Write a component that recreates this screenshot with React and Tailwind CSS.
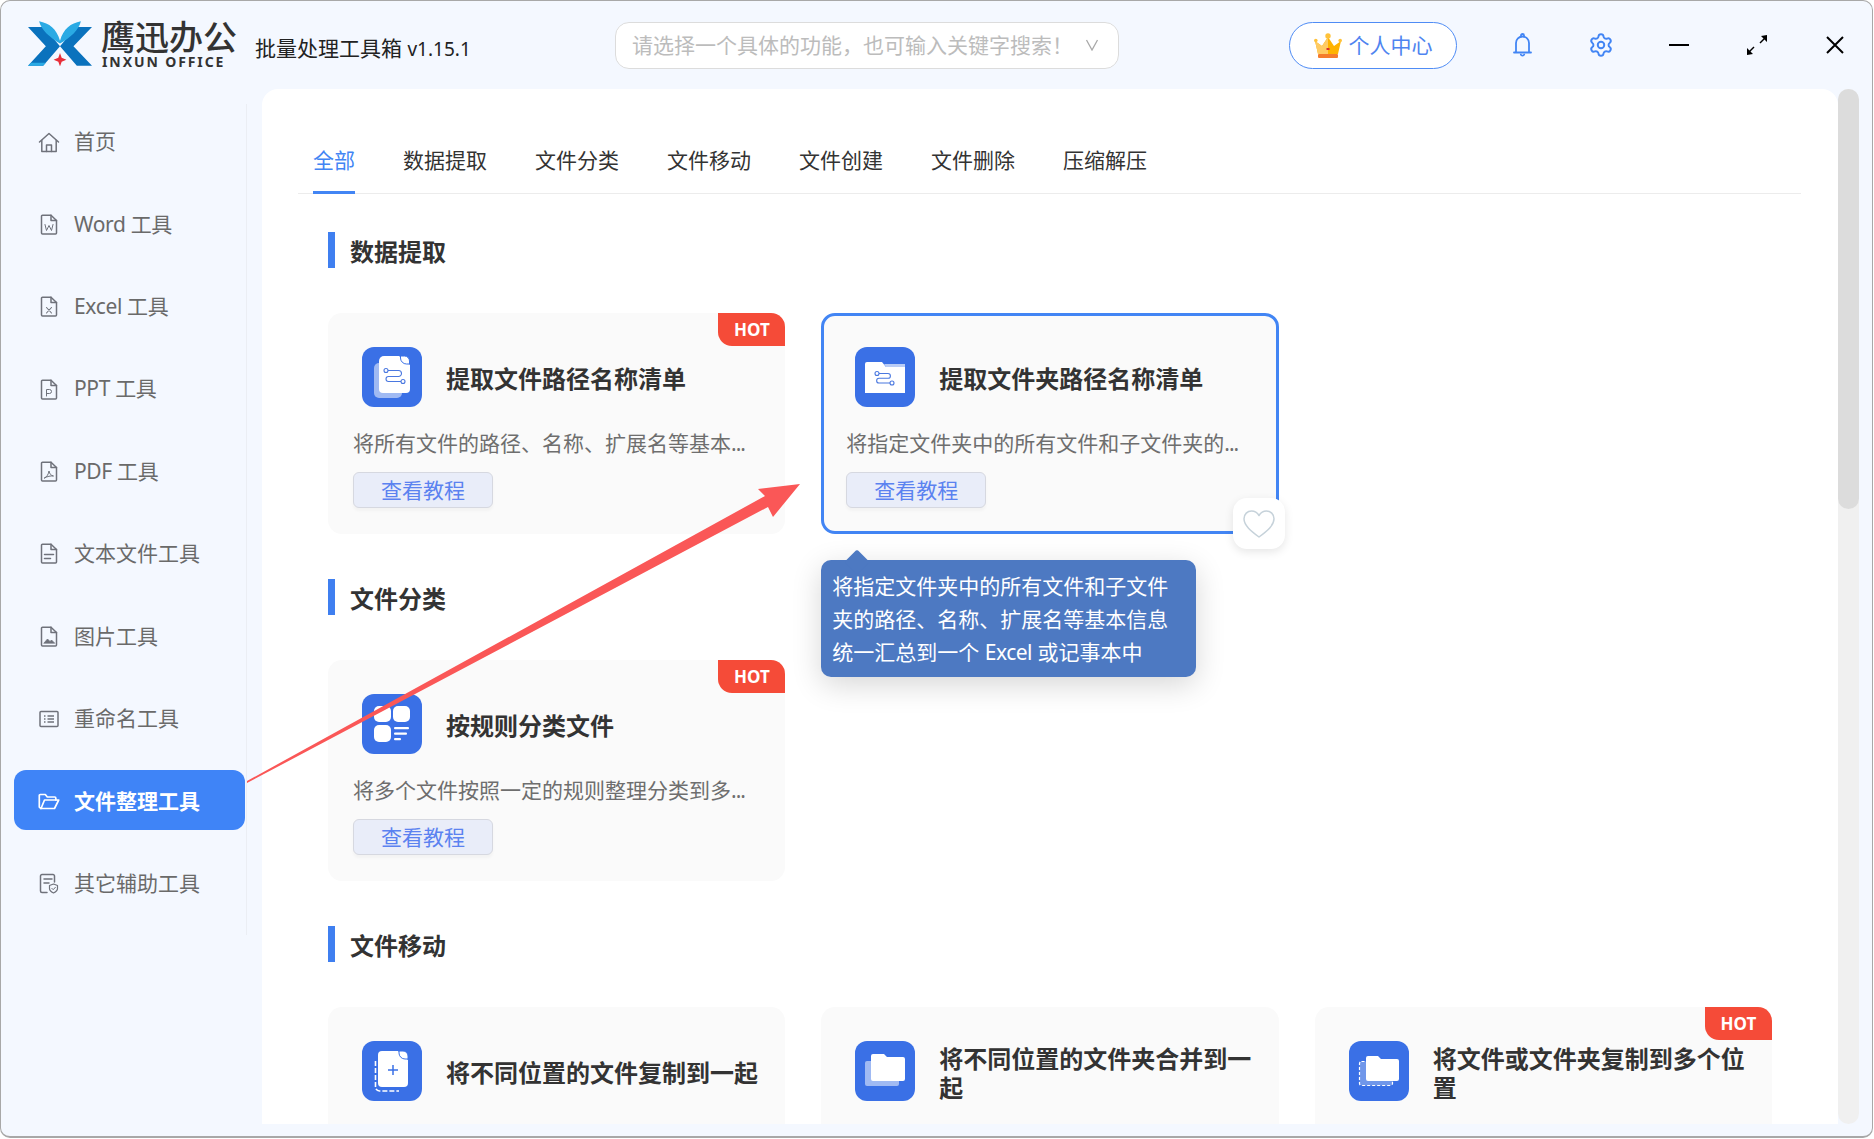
import React from "react";
import { Settings } from "lucide-react";

const FONT = 'font-["Noto_Sans","Noto_Sans_CJK_SC",sans-serif]';

function DocBase({ children }) {
  return (
    <svg width="18" height="21" viewBox="0 0 18 21" fill="none" stroke="#6f727b" strokeWidth="1.5" strokeLinejoin="round" strokeLinecap="round">
      <path d="M1.5 2.2a1 1 0 0 1 1-1H11l5.5 5.3V19a1 1 0 0 1-1 1h-13a1 1 0 0 1-1-1z" />
      <path d="M11 1.2v5.3h5.5" />
      {children}
    </svg>
  );
}

const sideIcons = {
  home: (
    <svg width="22" height="21" viewBox="0 0 22 21" fill="none" stroke="#6f727b" strokeWidth="1.5" strokeLinejoin="round" strokeLinecap="round">
      <path d="M1.5 10 11 1.5 20.5 10" />
      <path d="M3.8 8.5V19.5h14.4V8.5" />
      <path d="M8.5 19.5v-6.5h5v6.5" />
    </svg>
  ),
  word: <DocBase><path d="M5 10.5l1.5 6 2.5-5 2.5 5 1.5-6" strokeWidth="1" /></DocBase>,
  excel: <DocBase><path d="M6.5 11.5l5 5.5M11.5 11.5l-5 5.5" strokeWidth="1.1" /></DocBase>,
  ppt: <DocBase><path d="M6.5 17v-6.5h3a2 2 0 0 1 0 4h-3" strokeWidth="1" /></DocBase>,
  pdf: <DocBase><path d="M4.5 17c2.5-1 4-4 4.5-7 .5 3 2 4.5 4.5 5-3-.3-6 .3-9 2z" strokeWidth="1" /></DocBase>,
  text: <DocBase><path d="M4.5 11.5h9M4.5 15.5h6" strokeWidth="1.5" /></DocBase>,
  image: <DocBase><path d="M4 17l3.5-4 2.5 2.5 1.5-1.5L14.500 17z" fill="#6f727b" strokeWidth="0.8" /></DocBase>,
  rename: (
    <svg width="20" height="18" viewBox="0 0 20 18" fill="none" stroke="#6f727b" strokeWidth="1.5">
      <rect x="1" y="1.500" width="18" height="15" rx="1" />
      <path d="M5 6h1.500M5 9h1.500M5 12h1.500M8.500 6H15M8.500 9H15M8.500 12H15" />
    </svg>
  ),
  folder: (
    <svg width="22" height="17" viewBox="0 0 22 17" fill="none" stroke="#ffffff" strokeWidth="1.700" strokeLinejoin="round" strokeLinecap="round">
      <path d="M3 15.500 1.300 14V2.500a1 1 0 0 1 1-1h5l2 2.500h7.500a1 1 0 0 1 1 1V7" />
      <path d="M3 15.500h13.500L20.700 7H6.500z" />
    </svg>
  ),
  other: (
    <svg width="20" height="21" viewBox="0 0 20 21" fill="none" stroke="#6f727b" strokeWidth="1.500" strokeLinejoin="round" strokeLinecap="round">
      <path d="M8 19.500H3a1.500 1.500 0 0 1-1.500-1.500V3A1.500 1.500 0 0 1 3 1.500h11A1.500 1.500 0 0 1 15.500 3v6" />
      <path d="M5 6h8M5 10h5" />
      <path d="M14.500 11l4 1.500v3c0 2-2 3.500-4 4.500-2-1-4-2.500-4-4.500v-3z" strokeWidth="1.200" />
      <path d="M12.800 15.300l1.400 1.400 2.200-2.400" strokeWidth="1" />
    </svg>
  ),
};

const navItems = [
  ["home", "首页"],
  ["word", "Word 工具", false, true],
  ["excel", "Excel 工具", false, true],
  ["ppt", "PPT 工具", false, true],
  ["pdf", "PDF 工具", false, true],
  ["text", "文本文件工具"],
  ["image", "图片工具"],
  ["rename", "重命名工具"],
  ["folder", "文件整理工具", true],
  ["other", "其它辅助工具"],
];

const tabs = ["全部", "数据提取", "文件分类", "文件移动", "文件创建", "文件删除", "压缩解压"];

function ToolIcon({ kind }) {
  const b = "#3a70e6";
  return (
    <svg width="60" height="60" viewBox="0 0 60 60" className="shrink-0">
      <rect width="60" height="60" rx="12" fill={b} />
      {kind === "file" && (
        <g>
          <rect x="12" y="16" width="28" height="35" rx="5" fill="#a0baf3" />
          <path d="M22 9h15l11 9v24a4 4 0 0 1-4 4H21a4 4 0 0 1-4-4V14a5 5 0 0 1 5-5z" fill="#fff" />
          <path d="M38.500 9h4a5 5 0 0 1 5 5v3h-3a6 6 0 0 1-6-6z" fill="#fff" stroke={b} strokeWidth="1" />
          <g fill="none" stroke="#4a78e0" strokeWidth="1.100">
            <circle cx="24" cy="23.500" r="2" />
            <circle cx="41" cy="34.500" r="2" />
            <path d="M26 23.500h10.500a3 3 0 0 1 0 6H26.500a2.500 2.500 0 0 0 0 5H39" />
          </g>
        </g>
      )}
      {kind === "folder" && (
        <g>
          <path d="M10 17a2 2 0 0 1 2-2h15l4 5h19v26H10z" fill="#fff" />
          <path d="M29 17h21v3H31z" fill="#b9ccf6" />
          <g fill="none" stroke="#4a78e0" strokeWidth="1.100">
            <circle cx="22" cy="26.500" r="2" />
            <circle cx="37" cy="36" r="2" />
            <path d="M24 26.500h9a2.400 2.400 0 0 1 0 4.800H24a2.300 2.300 0 0 0 0 4.700h11" />
          </g>
        </g>
      )}
      {kind === "grid" && (
        <g fill="#fff">
          <rect x="12" y="12" width="17" height="16" rx="5" />
          <rect x="31" y="12" width="17" height="16" rx="5" />
          <rect x="12" y="31" width="17" height="17" rx="5" />
          <rect x="32" y="33" width="15" height="2.200" rx="1" />
          <rect x="32" y="38.500" width="13" height="2.200" rx="1" />
          <rect x="32" y="44" width="7" height="2.200" rx="1" />
        </g>
      )}
      {kind === "copy" && (
        <g>
          <path d="M13.500 20v26a4 4 0 0 0 4 4H37" fill="none" stroke="#fff" strokeWidth="1.600" strokeDasharray="5 2" />
          <path d="M20 10h16l10 9v23a4 4 0 0 1-4 4H20a4 4 0 0 1-4-4V14a4 4 0 0 1 4-4z" fill="#fff" />
          <path d="M37 10h4a5 5 0 0 1 5 5v3h-3a6 6 0 0 1-6-6z" fill="#fff" stroke={b} strokeWidth="1" />
          <path d="M31 24v10M26 29h10" stroke={b} strokeWidth="1.500" />
        </g>
      )}
      {kind === "merge" && (
        <g>
          <rect x="10" y="20" width="34" height="25" rx="2" fill="#a0baf3" />
          <path d="M16 15a2 2 0 0 1 2-2h11l3 3h16a2 2 0 0 1 2 2v20a2 2 0 0 1-2 2H18a2 2 0 0 1-2-2z" fill="#fff" />
        </g>
      )}
      {kind === "multi" && (
        <g>
          <rect x="10.500" y="20.500" width="33" height="24" rx="2" fill="#7097ea" stroke="#fff" strokeWidth="1.200" strokeDasharray="3 2" />
          <path d="M17 17a2 2 0 0 1 2-2h10l3 3h16a2 2 0 0 1 2 2v18a2 2 0 0 1-2 2H19a2 2 0 0 1-2-2z" fill="#fff" />
        </g>
      )}
    </svg>
  );
}

function Card({ icon, title, desc, hot, selected }) {
  return (
    <div
      className={
        "relative box-border h-[221px] rounded-[14px] border-[3px] bg-[#fafafa] px-[22px] pt-[31px] " +
        (selected ? "border-[#4285f4]" : "border-transparent")
      }
    >
      {hot && (
        <div className="absolute -right-[3px] -top-[3px] flex h-[33px] w-[67px] items-center justify-center rounded-bl-[14px] rounded-tr-[14px] bg-[#f54b38] text-[17px] font-bold text-white">
          HOT
        </div>
      )}
      <div className="flex h-[60px] items-center gap-6 pl-[9px]">
        <ToolIcon kind={icon} />
        <div className="flex-1 pt-[3px] text-[24px] font-bold leading-[29px] text-[#333333]">{title}</div>
      </div>
      {desc && (
        <div className="mt-[21px] whitespace-nowrap text-[21px] leading-[30px] text-[#6e6e6e]">
          {desc}
          <span className="tracking-[-1px]">...</span>
        </div>
      )}
      {desc && (
        <div className="mt-[14px] flex h-[36px] w-[140px] items-center justify-center rounded-[6px] border border-[#d6d8e0] bg-[#e9edf9] pt-[1px] text-[21px] text-[#5b82f0] shadow-[0_3px_3px_rgba(0,0,0,0.03)]">
          查看教程
        </div>
      )}
      {selected && (
        <>
          <div className="absolute left-[409px] top-[182px] flex h-[51px] w-[52px] items-center justify-center rounded-[14px] bg-white shadow-[0_3px_10px_rgba(0,0,0,0.1)]">
            <svg width="34" height="30" viewBox="0 0 34 30" fill="none" stroke="#c6d2da" strokeWidth="1.500" strokeLinejoin="round">
              <path d="M17 28C9 22 2 16.500 2 9.800 2 5 5.500 2 9.500 2c3 0 5.800 1.600 7.500 4.500C18.700 3.600 21.500 2 24.500 2 28.500 2 32 5 32 9.800 32 16.500 25 22 17 28z" />
            </svg>
          </div>
          <div className="absolute -left-[3px] top-[244px] z-10 h-[117px] w-[375px] rounded-[10px] bg-[#4d79c2] pl-[11px] pt-[10px] text-[21px] leading-[33px] text-white shadow-[0_8px_30px_rgba(0,0,0,0.16)]">
            <div className="absolute left-[27px] -top-[7px] h-[18px] w-[18px] rotate-45 rounded-[3px] bg-[#4d79c2]" />
            <div className="relative">
              将指定文件夹中的所有文件和子文件
              <br />
              夹的路径、名称、扩展名等基本信息
              <br />
              统一汇总到一个 <span className="tracking-[-0.5px]">Excel</span> 或记事本中
            </div>
          </div>
        </>
      )}
    </div>
  );
}

function Section({ title, children }) {
  return (
    <section className="mb-[45px]">
      <div className="mb-[45px] flex h-[36px] items-center gap-[15px]">
        <div className="h-full w-[7px] bg-[#3f7ff0]" />
        <h2 className="pt-[3px] text-[24px] font-bold text-[#333333]">{title}</h2>
      </div>
      <div className="grid grid-cols-3 gap-x-[36px]">{children}</div>
    </section>
  );
}

function Logo() {
  return (
    <div className="flex items-start gap-[9px]">
      <svg width="64" height="45" viewBox="25 18 190 132" className="mt-[1.5px]">
        <path d="M25 35h47l48 57-50 58H25l53-58z" fill="#0a72bd" />
        <path d="M215 35h-47l-48 57 50 58h45l-55-58z" fill="#0a72bd" />
        <path d="M25 150h45l8-9H34z" fill="#2aaae4" />
        <path d="M58 18c30 6 52 22 62 58 10-36 32-52 62-58-6 26-30 48-62 66-30-18-56-40-62-66z" fill="#2aaae4" />
        <path d="M120 112l5 14 14 6-14 6-5 14-5-14-14-6 14-6z" fill="#e8303a" />
      </svg>
      <div className="flex flex-col pb-[3px]">
        <div className="whitespace-nowrap text-[34px] font-medium leading-[34px] text-[#333333]">鹰迅办公</div>
        <div className="ml-[1px] mt-[2px] whitespace-nowrap text-[14px] font-bold leading-[12px] tracking-[1.9px] text-[#333333]">INXUN OFFICE</div>
      </div>
    </div>
  );
}

export default function App() {
  return (
    <div className={"relative h-[1139px] w-[1874px] overflow-hidden bg-white " + FONT}>
      <div className="flex h-[1138px] w-[1873px] flex-col overflow-hidden rounded-[10px] border border-b-2 border-[#a8a8a8] bg-[#f4f8ff]">
        <header className="flex h-[88px] shrink-0 items-center">
          <div className="flex w-[614px] shrink-0 items-center pl-[27px]">
            <Logo />
            <div className="ml-[18px] mt-[8px] whitespace-nowrap text-[21px] text-[#222222]">
              批量处理工具箱 <span className="text-[19px]">v1.15.1</span>
            </div>
          </div>
          <div className="flex h-[47px] w-[504px] shrink-0 items-center rounded-[14px] border border-[#dcdcdc] bg-white pl-[16px] pr-[19px]">
            <span className="flex-1 whitespace-nowrap pt-[1px] text-[21px] text-[#bcbcbc]">请选择一个具体的功能，也可输入关键字搜索！</span>
            <svg width="14" height="12" viewBox="0 0 14 12" fill="none" stroke="#a9a9a9" strokeWidth="1.300">
              <path d="M1.500 1l5.500 10 5.500-10" />
            </svg>
          </div>
          <div className="ml-[170px] flex h-[47px] w-[168px] shrink-0 items-center justify-center gap-[7px] rounded-full border border-[#4f8cf5] bg-white text-[21px] text-[#4f84f0]">
            <svg width="28" height="25" viewBox="0 0 28 25">
              <path d="M1 8l7 5 6-9 6 9 7-5-3 13H4z" fill="#ffb300" />
              <path d="M1 8l7 5 6-9v17H4z" fill="#ffcb63" />
              <circle cx="14" cy="3" r="2.700" fill="#ffc23a" />
              <circle cx="1.800" cy="7.500" r="1.800" fill="#ffc23a" />
              <circle cx="26.200" cy="7.500" r="1.800" fill="#ffc23a" />
              <rect x="4" y="21" width="20" height="4" rx="1" fill="#f57c2c" />
              <rect x="12.500" y="15" width="3" height="2" fill="#d9302b" />
            </svg>
            <span className="pt-[1px]">个人中心</span>
          </div>
          <svg width="19" height="24" viewBox="0 0 19 24" fill="none" stroke="#4285f4" strokeWidth="1.800" className="ml-[56px] shrink-0" strokeLinecap="round" strokeLinejoin="round">
            <path d="M1 19.500h17M3 19.500V10a6.500 6.500 0 0 1 13 0v9.500" />
            <path d="M8 3.500V2.500a1.500 1.500 0 0 1 3 0v1M7.800 21.500a1.800 1.800 0 0 0 3.400 0" />
          </svg>
          <Settings size={26} color="#4285f4" strokeWidth={1.800} className="ml-[56px] shrink-0" />
          <div className="ml-[55px] h-[2px] w-[20px] shrink-0 bg-black" />
          <svg width="20" height="20" viewBox="0 0 20 20" className="ml-[58px] shrink-0" fill="#000">
            <path d="M20 0v7l-2.500-2.500-4 4-1-1 4-4L14 1z" />
            <path d="M0 20v-7l2.500 2.500 4-4 1 1-4 4L6 19z" />
          </svg>
          <svg width="18" height="18" viewBox="0 0 18 18" className="ml-[59px] shrink-0" stroke="#000" strokeWidth="2">
            <path d="M1 1l16 16M17 1L1 17" />
          </svg>
        </header>
        <div className="flex min-h-0 flex-1 pb-[12px] pr-[13px]">
          <aside className="w-[261px] shrink-0 pl-[13px] pt-[15px]">
            <div className="h-[831px] w-[233px] border-r border-[#ebeef4] pt-[8px]">
              <nav className="flex w-[231px] flex-col gap-[22.4px]">
                {navItems.map(([icon, label, active, latin]) => (
                  <div
                    key={label}
                    className={
                      "flex h-[60px] items-center rounded-[12px] text-[21px] " +
                      (active ? "-translate-y-px bg-[#3f84f7] pt-[3px] font-bold text-white" : "text-[#6a6a6a]")
                    }
                  >
                    <div className="flex w-[48px] shrink-0 items-center justify-center pl-[21px]">{sideIcons[icon]}</div>
                    <span className={"ml-[12px] whitespace-nowrap" + (latin ? " tracking-[-0.35px]" : "")}>{label}</span>
                  </div>
                ))}
              </nav>
            </div>
          </aside>
          <main className="flex min-w-0 flex-1 overflow-hidden rounded-t-2xl bg-white">
            <div className="min-w-0 flex-1 overflow-hidden pl-[36px] pr-[37px] pt-[51px]">
              <div className="flex h-[54px] gap-[48px] border-b border-[#ececec] pl-[15px]">
                {tabs.map((t, i) => (
                  <div
                    key={t}
                    className={
                      "h-[54px] whitespace-nowrap text-[21px] leading-[40px] " +
                      (i === 0 ? "border-b-[3px] border-[#4285f4] text-[#4285f4]" : "text-[#333333]")
                    }
                  >
                    {t}
                  </div>
                ))}
              </div>
              <div className="ml-[30px] mr-[29px] mt-[38px]">
                <Section title="数据提取">
                  <Card icon="file" hot title="提取文件路径名称清单" desc="将所有文件的路径、名称、扩展名等基本" />
                  <Card icon="folder" selected title="提取文件夹路径名称清单" desc="将指定文件夹中的所有文件和子文件夹的" />
                </Section>
                <Section title="文件分类">
                  <Card icon="grid" hot title="按规则分类文件" desc="将多个文件按照一定的规则整理分类到多" />
                </Section>
                <Section title="文件移动">
                  <Card icon="copy" title="将不同位置的文件复制到一起" />
                  <Card icon="merge" title="将不同位置的文件夹合并到一起" />
                  <Card icon="multi" hot title="将文件或文件夹复制到多个位置" />
                </Section>
              </div>
            </div>
          </main>
          <div className="h-full w-[21px] shrink-0 rounded-full bg-[#f0f0f0]">
            <div className="h-[420px] rounded-full bg-[#dcdcdc]" />
          </div>
        </div>
      </div>
      <svg width="1874" height="1139" className="pointer-events-none absolute inset-0 z-20">
        <polygon points="247,781 765,496 758,489 800,484 773,517 768,507 247,783" fill="#fa5757" />
      </svg>
    </div>
  );
}
